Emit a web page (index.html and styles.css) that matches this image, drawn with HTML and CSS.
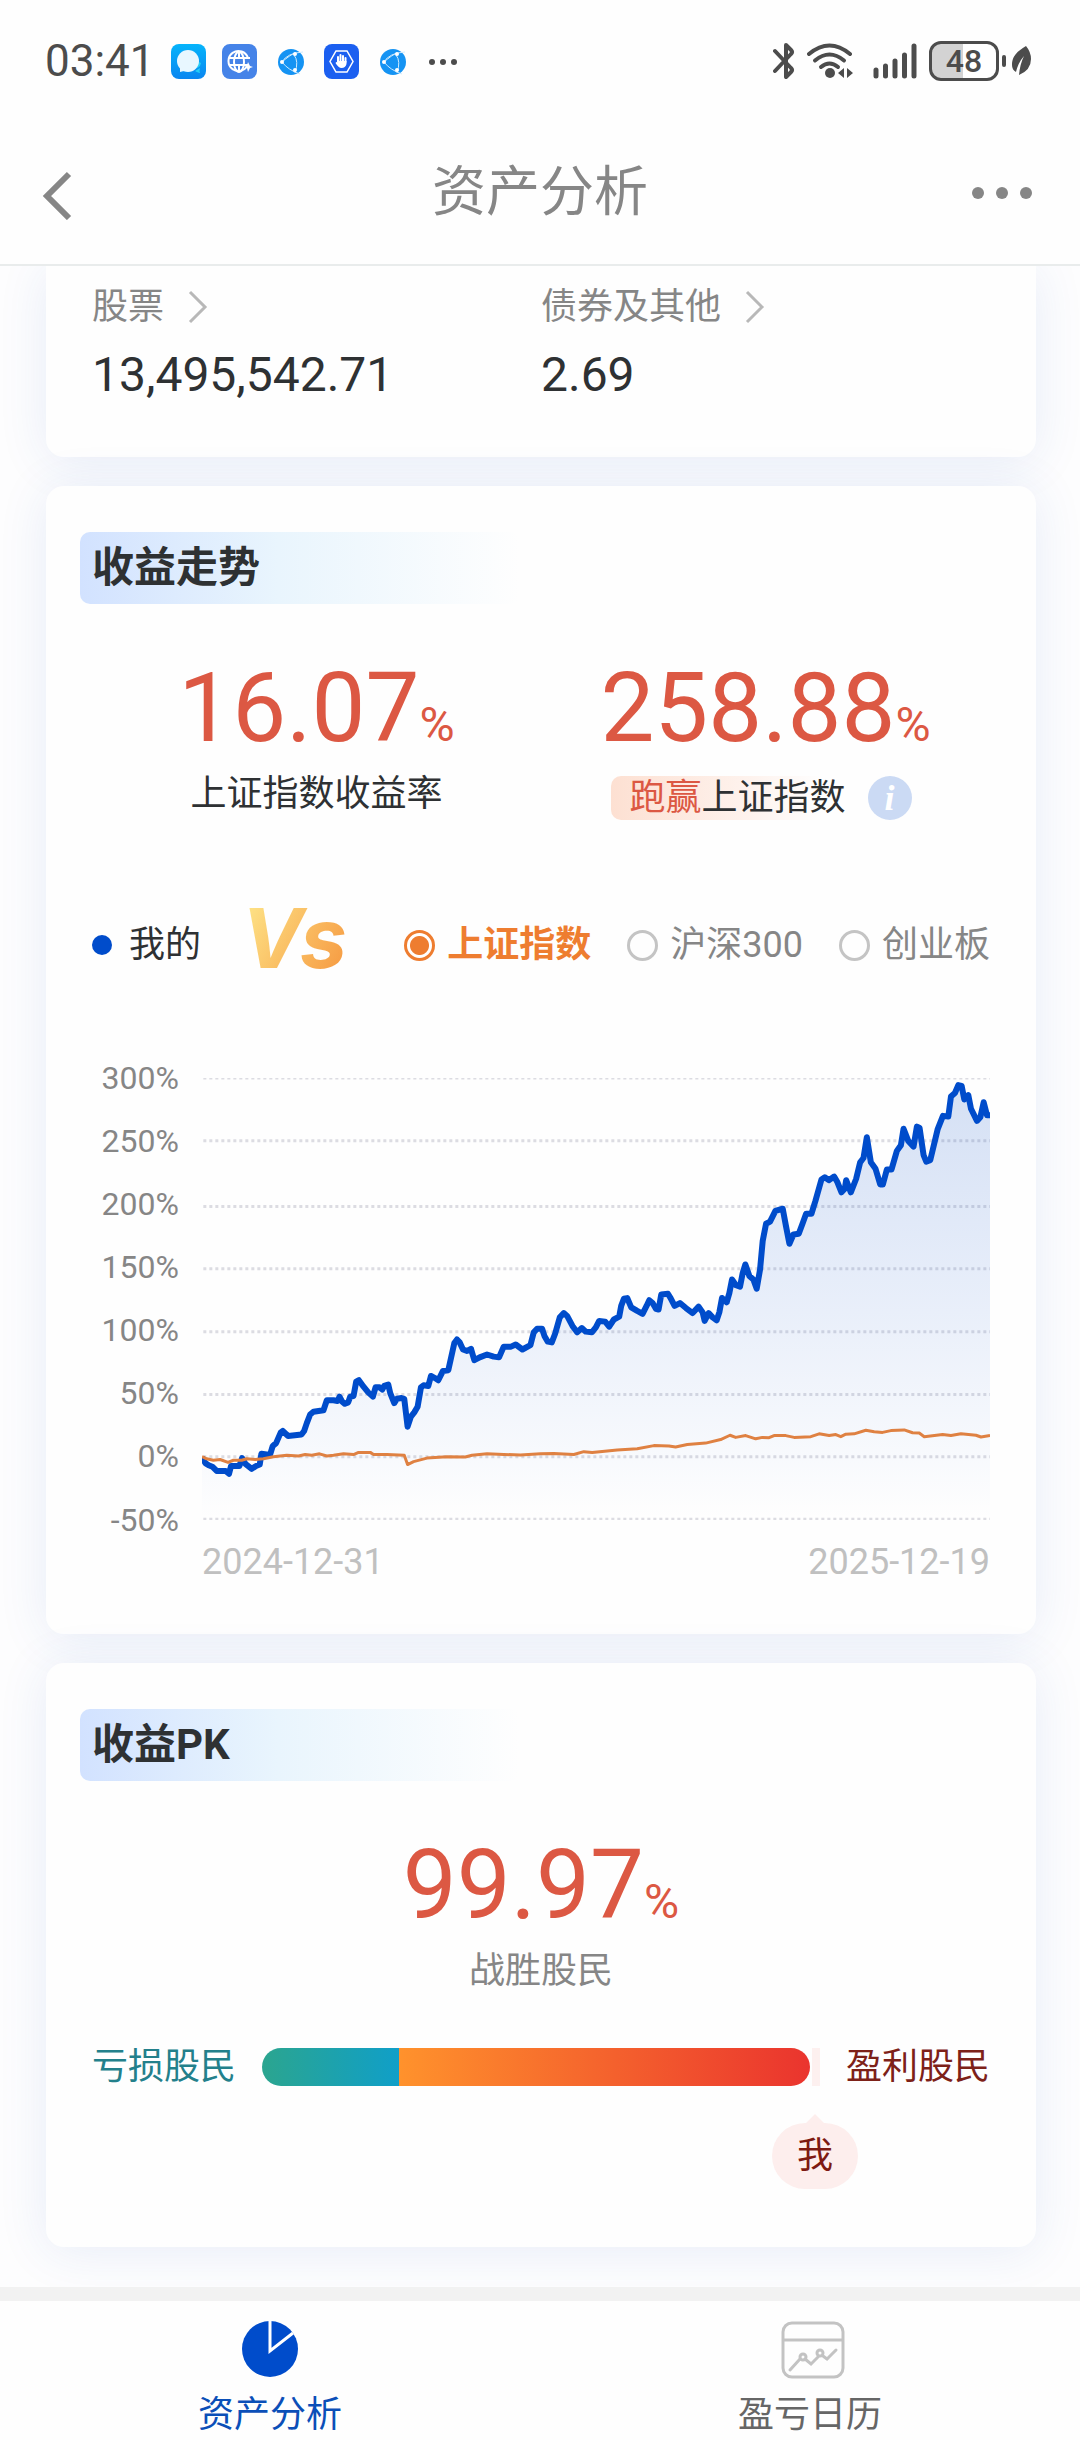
FILE: index.html
```html
<!DOCTYPE html>
<html lang="zh-CN">
<head>
    <meta charset="UTF-8">
    <meta name="viewport" content="width=device-width, initial-scale=1.0">
    <title>资产分析</title>
    <link rel="stylesheet" href="styles.css">
</head>
<body>
    <header class="header">
        <div class="status-bar">
            <div class="status-left">
                <span class="time">03:41</span>
                <svg class="app-icon" viewBox="0 0 35 35">
                    <defs>
                        <linearGradient id="chatBg" x1="0" y1="0" x2="0" y2="1">
                            <stop offset="0" stop-color="#05b4fb"/>
                            <stop offset="1" stop-color="#0a86f0"/>
                        </linearGradient>
                    </defs>
                    <rect width="35" height="35" rx="8" fill="url(#chatBg)"/>
                    <path d="M22 24a6 6 0 0 0 8-5l-2-1-6 4zM24 27q4 2 5 2-1-2 0-5z" fill="#25cdf5"/>
                    <circle cx="17" cy="17" r="11" fill="#e8f7ff"/>
                    <path d="M9 22v6l8-2z" fill="#e8f7ff"/>
                </svg>
                <svg class="app-icon" viewBox="0 0 35 35">
                    <rect width="35" height="35" rx="8" fill="#4583e8"/>
                    <g fill="none" stroke="#fff" stroke-width="2">
                        <path d="M26 20a10 10 0 1 1 0-6"/>
                        <ellipse cx="17" cy="18" rx="5" ry="10"/>
                        <path d="M7 14h21M7 21h18M17 8v6M17 21v7"/>
                    </g>
                    <path d="M26 18l2 4 3 1-3 1-2 4-1-4-3-1 3-1z" fill="#fff"/>
                </svg>
                <svg class="app-icon" viewBox="0 0 35 35">
                    <circle cx="18" cy="18" r="13" fill="#1593f3"/>
                    <path d="M30 8Q14 9 9 18q6 8 18 12M21 11q5 6 1 18M9 18q8-7 13-9" fill="none" stroke="#cdeaff" stroke-width="1"/>
                    <g fill="#fff"><circle cx="9" cy="18" r="2"/><circle cx="22" cy="10" r="2"/><circle cx="22" cy="26" r="2"/></g>
                </svg>
                <svg class="app-icon" viewBox="0 0 35 35">
                    <rect width="35" height="35" rx="8" fill="#1b5ff0"/>
                    <path d="M12 7h11l6 10.500-6 10.500H12L6 17.500z" fill="none" stroke="#fff" stroke-width="1.500"/>
                    <path d="M14 18v-5M16.500 17v-6M19 17v-5M21.500 18v-4" stroke="#fff" stroke-width="2" stroke-linecap="round"/>
                    <path d="M13 17h9.500v3q-1 4-5 4-3 0-6-5 1-2 3 0z" fill="#fff"/>
                </svg>
                <svg class="app-icon" viewBox="0 0 35 35">
                    <circle cx="18" cy="18" r="13" fill="#1593f3"/>
                    <path d="M30 8Q14 9 9 18q6 8 18 12M21 11q5 6 1 18M9 18q8-7 13-9" fill="none" stroke="#cdeaff" stroke-width="1"/>
                    <g fill="#fff"><circle cx="9" cy="18" r="2"/><circle cx="22" cy="10" r="2"/><circle cx="22" cy="26" r="2"/></g>
                </svg>
                <svg class="app-icon" viewBox="0 0 35 35">
                    <g fill="#4c4c4c"><circle cx="6" cy="18" r="3"/><circle cx="17" cy="18" r="3"/><circle cx="28" cy="18" r="3"/></g>
                </svg>
            </div>
            <div class="status-right">
                <svg width="22" height="38" viewBox="0 0 22 38">
                    <path d="M2 9l16 17q2 2 0 4l-5 5V3l5 5q2 2 0 4L2 29" fill="none" stroke="#4c4c4c" stroke-width="4" stroke-linejoin="round" stroke-linecap="round"/>
                </svg>
                <svg width="46" height="38" viewBox="0 0 46 38">
                    <g fill="none" stroke="#4c4c4c" stroke-width="4" stroke-linecap="round">
                        <path d="M2 12q20.500-17 41 0"/>
                        <path d="M8 18.500q14.500-12 29 0"/>
                        <path d="M14 25q8.500-7 17 0"/>
                    </g>
                    <circle cx="23" cy="31" r="5" fill="#4c4c4c"/>
                    <path d="M31 31l6-5v10zM46 31l-6-5v10z" fill="#4c4c4c"/>
                </svg>
                <svg width="52" height="38" viewBox="0 0 52 38">
                    <path d="M11 28v6M20.500 24v10M30 19v15M39.500 13v21M49 4v30" stroke="#4c4c4c" stroke-width="5" stroke-linecap="round"/>
                </svg>
                <span class="battery">48</span>
                <svg width="21" height="32" viewBox="0 0 21 32">
                    <path d="M15 1C5 7 1 12 1 20q0 5 4 7 2-9 8-16Q9 19 8 30 20 25 20 14 20 7 15 1z" fill="#4c4c4c"/>
                </svg>
            </div>
        </div>
        <div class="title-bar">
            <button class="icon-button" aria-label="返回">
                <svg width="30" height="54" viewBox="0 0 30 54">
                    <path d="M27 8L5 30l22 22" fill="none" stroke="#868686" stroke-width="6"/>
                </svg>
            </button>
            <h1 class="page-title">资产分析</h1>
            <button class="icon-button" aria-label="更多">
                <svg width="62" height="48" viewBox="0 0 62 48">
                    <g fill="#868686"><circle cx="8" cy="24" r="6"/><circle cx="32" cy="24" r="6"/><circle cx="56" cy="24" r="6"/></g>
                </svg>
            </button>
        </div>
    </header>

    <main class="content">
        <section class="card card-assets">
            <div class="inner two-columns">
                <div>
                    <a class="asset-link" href="#">股票
                        <svg width="20" height="34" viewBox="0 0 20 34"><path d="M2 2l15 15L2 32" fill="none" stroke="#b8b8b8" stroke-width="3"/></svg>
                    </a>
                    <p class="asset-value">13,495,542.71</p>
                </div>
                <div>
                    <a class="asset-link" href="#">债券及其他
                        <svg width="20" height="34" viewBox="0 0 20 34"><path d="M2 2l15 15L2 32" fill="none" stroke="#b8b8b8" stroke-width="3"/></svg>
                    </a>
                    <p class="asset-value">2.69</p>
                </div>
            </div>
        </section>

        <section class="card card-trend">
            <h2 class="card-title">收益走势</h2>
            <div class="inner two-columns">
                <div class="stat">
                    <p class="stat-value">16.07<span class="percent">%</span></p>
                    <p class="stat-label">上证指数收益率</p>
                </div>
                <div class="stat">
                    <p class="stat-value">258.88<span class="percent">%</span></p>
                    <div class="stat-row">
                        <p class="stat-label beat"><span class="beat-word">跑赢</span>上证指数</p>
                        <button class="info" aria-label="说明">i</button>
                    </div>
                </div>
            </div>

            <div class="inner legend">
                <span class="mine">我的</span>
                <span class="versus">Vs</span>
                <div class="options">
                    <label class="option"><input type="radio" name="benchmark" checked><span>上证指数</span></label>
                    <label class="option"><input type="radio" name="benchmark"><span>沪深300</span></label>
                    <label class="option"><input type="radio" name="benchmark"><span>创业板</span></label>
                </div>
            </div>

            <div class="inner chart">
                <div class="axis">
                    <span>300%</span>
                    <span>250%</span>
                    <span>200%</span>
                    <span>150%</span>
                    <span>100%</span>
                    <span>50%</span>
                    <span>0%</span>
                    <span>-50%</span>
                </div>
                <svg class="plot" viewBox="426 104 2361 1236" preserveAspectRatio="none">
                    <defs>
                        <linearGradient id="area" x1="0" y1="0" x2="0" y2="1">
                            <stop offset="0" stop-color="#0b4fc4" stop-opacity="0.170"/>
                            <stop offset="0.500" stop-color="#0b50d0" stop-opacity="0.090"/>
                            <stop offset="1" stop-color="#0b50d0" stop-opacity="0"/>
                        </linearGradient>
                    </defs>
                    <path class="grid-lines" d="M430 104H2787M430 280H2787M430 464H2787M430 638H2787M430 814H2787M430 990H2787M430 1164H2787M430 1339H2787"/>
                    <polygon id="mineArea" fill="url(#area)"/>
                    <polyline id="mineLine" class="line-mine" points="426,1166 436,1182 446,1188 457,1192 470,1204 497,1204 507,1212 513,1190 538,1190 546,1168 556,1184 575,1198 588,1190 599,1186 604,1156 620,1158 630,1158 638,1134 648,1126 662,1096 668,1092 684,1106 724,1102 732,1092 740,1070 750,1046 760,1038 790,1034 800,1006 820,1006 832,1008 838,996 846,1010 854,1016 864,1012 870,996 880,994 888,954 896,950 910,968 924,984 938,996 946,970 958,970 966,976 972,966 984,962 990,986 1002,1014 1010,1002 1024,1000 1032,1002 1042,1080 1052,1052 1062,1040 1072,1024 1082,970 1090,964 1104,966 1112,938 1124,944 1134,950 1148,924 1164,922 1172,888 1182,846 1190,836 1198,844 1208,864 1220,868 1232,862 1242,894 1258,886 1280,878 1300,884 1316,886 1330,856 1352,856 1366,850 1386,864 1410,852 1420,816 1430,806 1445,806
                        1452,826 1462,842 1474,844 1484,820 1498,774 1510,762 1520,770 1536,798 1550,816 1564,804 1576,814 1594,816 1606,802 1616,784 1634,786 1646,800 1660,780 1676,772 1682,742 1690,722 1700,720 1712,746 1730,756 1746,764 1758,742 1766,726 1776,734 1786,750 1794,752 1802,710 1822,708 1830,720 1842,742 1858,734 1876,748 1896,762 1914,744 1926,760 1932,784 1944,762 1956,774 1968,782 1976,760 1984,720 1998,732 2006,706 2014,668 2026,684 2038,688 2046,650 2054,626 2066,658 2078,668 2088,694 2098,640 2106,560 2116,512 2128,506 2144,476 2166,470 2176,520 2186,568 2198,542 2214,540 2226,510 2236,484 2252,484 2264,448 2282,388 2292,382 2304,390 2320,380 2330,396 2342,424 2352,414 2356,390 2370,424 2386,386 2398,340 2408,328 2418,270 2430,340 2444,358 2458,402 2466,402 2478,360 2492,360 2508,308 2520,292 2528,246 2542,280 2558,296 2568,240 2576,244 2588,320 2596,338 2608,334 2630,248 2646,210 2662,212 2670,156 2682,146 2692,124 2702,126 2710,164 2722,152 2730,190 2748,224 2758,214 2768,172 2778,208 2787,208"/>
                    <polyline class="line-index" points="426,1164 440,1170 460,1174 480,1172 504,1180 520,1174 545,1174 560,1170 585,1172 610,1170 640,1164 680,1160 715,1162 735,1158 755,1160 778,1156 800,1162 820,1160 850,1156 880,1158 895,1152 930,1152 940,1158 980,1158 1032,1160 1042,1186 1060,1178 1100,1168 1160,1164 1215,1165 1235,1160 1280,1156 1330,1158 1380,1159 1440,1156
                        1480,1155 1540,1158 1570,1150 1595,1152 1670,1145 1730,1142 1780,1133 1825,1134 1845,1137 1880,1130 1935,1126 1980,1116 2008,1104 2025,1110 2055,1105 2085,1114 2105,1110 2125,1111 2140,1105 2175,1105 2200,1110 2250,1108 2275,1100 2305,1105 2325,1102 2340,1108 2355,1101 2380,1100 2415,1090 2440,1094 2465,1096 2490,1091 2530,1089 2555,1097 2575,1098 2590,1108 2645,1102 2670,1105 2700,1100 2745,1104 2760,1109 2787,1105"/>
                </svg>
                <div class="dates">
                    <span>2024-12-31</span>
                    <span>2025-12-19</span>
                </div>
            </div>
        </section>

        <section class="card card-pk">
            <h2 class="card-title">收益PK</h2>
            <div class="stat">
                <p class="stat-value">99.97<span class="percent">%</span></p>
                <p class="stat-label muted">战胜股民</p>
            </div>
            <div class="inner pk">
                <span class="pk-loss">亏损股民</span>
                <div class="track">
                    <div class="bar">
                        <div class="bar-loss"></div>
                        <div class="bar-profit"></div>
                    </div>
                    <div class="marker"></div>
                    <span class="me">我</span>
                </div>
                <span class="pk-profit">盈利股民</span>
            </div>
        </section>
    </main>

    <nav class="tabs">
        <a class="tab active" href="#">
            <svg width="64" height="58" viewBox="0 0 64 58">
                <circle cx="32" cy="28" r="28" fill="#004ccb"/>
                <path d="M32 0v30l23-18" fill="none" stroke="#fff" stroke-width="3"/>
            </svg>
            资产分析
        </a>
        <a class="tab" href="#">
            <svg width="70" height="58" viewBox="-6 0 70 58">
                <g fill="none" stroke="#c3c3c3" stroke-width="3">
                    <rect x="2" y="2" width="60" height="54" rx="9"/>
                    <path d="M2 19h60"/>
                    <path d="M9 49l10-11M24 38l6 5 7-7M42 35l4 3 9-9" stroke-linecap="round"/>
                    <circle cx="22" cy="36" r="3"/>
                    <circle cx="39" cy="32" r="3"/>
                </g>
            </svg>
            盈亏日历
        </a>
    </nav>

    <script>
        // close the line down to the bottom of the plot for the shaded area
        const minePoints = document.getElementById('mineLine').getAttribute('points');
        document.getElementById('mineArea').setAttribute('points', '426,1340 ' + minePoints + ' 2787,1340');
    </script>
</body>
</html>
```
FILE: styles.css
```css
* {
    box-sizing: border-box;
}

body {
    font-family: Roboto, "Noto Sans CJK SC", sans-serif;
    font-size: 36px;
    line-height: 44px;
    background-color: #fdfdfe;
    color: #2e3133;
    display: flex;
    flex-direction: column;
    min-height: 100vh;
    margin: 0;
}

h1, h2, p {
    margin: 0;
}

a {
    color: inherit;
    text-decoration: none;
}

button {
    border: none;
    background: none;
    padding: 0;
    cursor: pointer;
}

svg {
    display: block;
    flex-shrink: 0;
}

/* header */
.header {
    position: relative;
    z-index: 1;
    background-color: #fefefe;
    border-bottom: 2px solid #e9ecec;
}

.status-bar {
    display: flex;
    justify-content: space-between;
    align-items: center;
    height: 122px;
    padding: 0 48px 0 45px;
}

.status-left {
    display: flex;
    align-items: center;
    gap: 16px;
}

.status-right {
    display: flex;
    align-items: center;
    gap: 12px;
}

.time {
    font-size: 44px;
    color: #4c4c4c;
}

.app-icon {
    width: 35px;
    height: 35px;
}

.battery {
    position: relative;
    width: 70px;
    height: 40px;
    border: 3px solid #4c4c4c;
    border-radius: 12px;
    background: linear-gradient(90deg, #d3d3d3 48%, #fff 48%);
    font-size: 32px;
    font-weight: 500;
    line-height: 34px;
    text-align: center;
    color: #4c4c4c;
}

.battery::after {
    content: "";
    position: absolute;
    right: -10px;
    top: 11px;
    width: 4px;
    height: 12px;
    border-radius: 2px;
    background-color: #4c4c4c;
}

.title-bar {
    display: flex;
    justify-content: space-between;
    align-items: center;
    height: 142px;
    padding: 0 42px;
}

.icon-button {
    width: 70px;
    display: flex;
}

.icon-button:last-child {
    justify-content: flex-end;
    padding-right: 6px;
}

.page-title {
    font-size: 54px;
    font-weight: 400;
    line-height: 60px;
    color: #868686;
}

/* cards */
.content {
    flex: 1;
    display: flex;
    flex-direction: column;
    gap: 29px;
    padding: 0 44px 40px 46px;
}

.card {
    background-color: #fefefe;
    border-radius: 18px;
    padding: 46px 34px 0;
    box-shadow: 0 4px 50px rgba(40, 90, 190, 0.1);
}

.card-assets {
    padding-top: 19px;
    padding-bottom: 52px;
    border-radius: 0 0 18px 18px;
}

.card-trend {
    padding-bottom: 50px;
}

.card-pk {
    padding-bottom: 158px;
}

.inner {
    padding: 0 12px;
}

.two-columns {
    display: grid;
    grid-template-columns: 1fr 1fr;
}

.asset-link {
    display: flex;
    align-items: center;
    gap: 24px;
    color: #868686;
}

.asset-value {
    margin-top: 16px;
    font-size: 48px;
    line-height: 60px;
}

.card-title {
    width: 440px;
    max-width: 100%;
    padding-left: 12px;
    border-radius: 10px;
    background: linear-gradient(90deg, #d2e2ff, #e9f5fd 45%, #fefefe);
    font-size: 42px;
    font-weight: 700;
    line-height: 72px;
}

.stat {
    display: flex;
    flex-direction: column;
    align-items: center;
}

.stat-value {
    margin-top: 56px;
    font-size: 96px;
    line-height: 96px;
    color: #dc5843;
}

.percent {
    font-size: 48px;
    line-height: 48px;
}

.stat-label {
    margin-top: 16px;
}

.muted {
    color: #868686;
}

.stat-row {
    display: flex;
    align-items: center;
    gap: 22px;
    margin-top: 20px;
    padding-right: 8px;
}

.beat {
    margin-top: 0;
    padding-left: 18px;
    border-radius: 10px;
    background: linear-gradient(90deg, #fde0d2, #fef3ee 60%, #fefefe 90%);
}

.beat-word {
    color: #dc5843;
}

.info {
    width: 44px;
    height: 44px;
    border-radius: 50%;
    background-color: #cbdaf4;
    color: #fff;
    font-family: "Liberation Serif", serif;
    font-size: 36px;
    font-style: italic;
    font-weight: 700;
    line-height: 44px;
}

/* legend */
.legend {
    display: flex;
    align-items: center;
    gap: 40px;
    margin-top: 88px;
}

.mine {
    display: flex;
    align-items: center;
    gap: 17px;
}

.mine::before {
    content: "";
    width: 20px;
    height: 20px;
    border-radius: 50%;
    background-color: #004ccb;
}

.versus {
    padding: 0 6px 14px 0;
    background: linear-gradient(120deg, #fee588, #f5923a);
    -webkit-background-clip: text;
    background-clip: text;
    color: transparent;
    font-family: Inter, sans-serif;
    font-size: 84px;
    font-style: italic;
    font-weight: 700;
    line-height: 60px;
}

.options {
    display: flex;
    gap: 36px;
    margin-left: auto;
}

.option {
    display: flex;
    align-items: center;
    gap: 12px;
    color: #868686;
}

.option input {
    appearance: none;
    width: 31px;
    height: 31px;
    margin: 0;
    border: 3px solid #c4c4c4;
    border-radius: 50%;
}

.option input:checked {
    border-color: #ee7d30;
    background: radial-gradient(circle, #ee7d30 9px, #fff 10px);
}

.option input:checked + span {
    color: #ee7d30;
    font-weight: 700;
}

/* chart */
.chart {
    display: grid;
    grid-template-columns: 87px 1fr;
    column-gap: 23px;
    margin-top: 96px;
}

.axis {
    display: flex;
    flex-direction: column;
    justify-content: space-between;
    margin: -18px 0;
    font-size: 32px;
    line-height: 36px;
    text-align: right;
    color: #868686;
}

.plot {
    width: 100%;
    aspect-ratio: 787 / 441;
}

.plot path,
.plot polyline {
    vector-effect: non-scaling-stroke;
}

.grid-lines {
    stroke: #dcdce2;
    stroke-width: 3;
    stroke-dasharray: 3;
}

.line-mine {
    fill: none;
    stroke: #004ccb;
    stroke-width: 6;
    stroke-linejoin: round;
}

.line-index {
    fill: none;
    stroke: #df8142;
    stroke-width: 3;
    stroke-linejoin: round;
}

.dates {
    grid-column: 2;
    display: flex;
    justify-content: space-between;
    margin-top: 20px;
    color: #c0c0c0;
}

/* pk */
.pk {
    display: flex;
    align-items: center;
    gap: 26px;
    margin-top: 52px;
}

.pk-loss {
    color: #23808b;
}

.pk-profit {
    color: #7d2118;
}

.track {
    position: relative;
    flex: 1;
    display: flex;
    gap: 2px;
    height: 38px;
}

.bar {
    flex: 1;
    display: flex;
    border-radius: 19px;
    overflow: hidden;
}

.bar-loss {
    width: 25%;
    background: linear-gradient(90deg, #2ba58f, #109fc8);
}

.bar-profit {
    flex: 1;
    background: linear-gradient(90deg, #ff922c, #ea342e);
}

.marker {
    width: 8px;
    background-color: #fdf0ef;
}

.me {
    position: absolute;
    top: 75px;
    right: -38px;
    width: 86px;
    border-radius: 33px;
    background-color: #fdeeed;
    line-height: 66px;
    text-align: center;
    color: #7d1a12;
}

.me::before {
    content: "";
    position: absolute;
    left: 33px;
    top: -9px;
    border: 10px solid transparent;
    border-top: none;
    border-bottom-color: #fdeeed;
}

/* bottom tabs */
.tabs {
    display: grid;
    grid-template-columns: 1fr 1fr;
    border-top: 14px solid #f2f2f2;
    background-color: #fefefe;
}

.tab {
    display: flex;
    flex-direction: column;
    align-items: center;
    gap: 14px;
    padding: 20px 0 5px;
    color: #666;
}

.tab.active {
    color: #0b4fb8;
}
```
